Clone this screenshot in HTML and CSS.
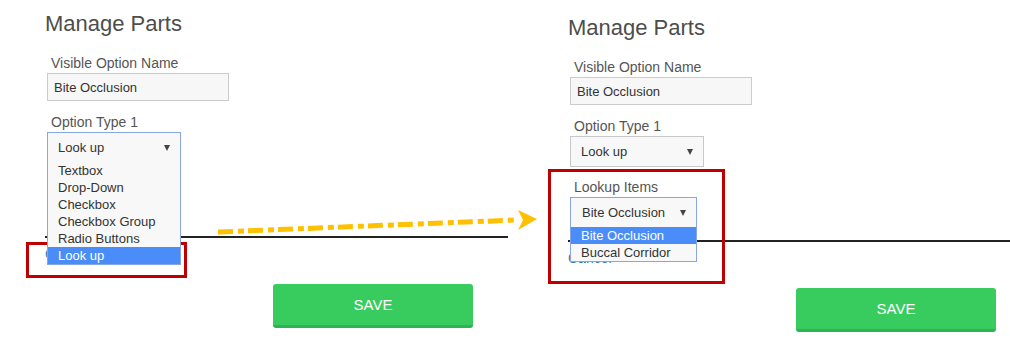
FILE: index.html
```html
<!DOCTYPE html>
<html lang="en">
<head>
    <meta charset="UTF-8">
    <title>Manage Parts - Lookup Items</title>
    <link rel="stylesheet" href="styles.css">
</head>
<body>

    <div class="page">

        <!-- before: option type set to "Look up" -->
        <section class="panel panel-before">
            <h2 class="title">Manage Parts</h2>

            <div class="field">
                <label class="field-label">Visible Option Name</label>
                <input class="input input-name" type="text" value="Bite Occlusion" readonly>
            </div>

            <div class="field">
                <label class="field-label">Option Type 1</label>
                <div class="select select-type is-focused">
                    <span class="select-value">Look up</span>
                    <i class="caret"></i>
                    <ul class="options">
                        <li>Textbox</li>
                        <li>Drop-Down</li>
                        <li>Checkbox</li>
                        <li>Checkbox Group</li>
                        <li>Radio Buttons</li>
                        <li class="active">Look up</li>
                    </ul>
                </div>
            </div>

            <hr class="rule rule-low">
            <a class="cancel" href="#">Cancel</a>
            <button class="save" type="button">SAVE</button>
        </section>

        <!-- after: lookup items field appears -->
        <section class="panel panel-after">
            <h2 class="title">Manage Parts</h2>

            <div class="field">
                <label class="field-label">Visible Option Name</label>
                <input class="input input-name" type="text" value="Bite Occlusion" readonly>
            </div>

            <div class="field">
                <label class="field-label">Option Type 1</label>
                <div class="select select-type">
                    <span class="select-value">Look up</span>
                    <i class="caret"></i>
                </div>
            </div>

            <div class="field field-lookup">
                <label class="field-label">Lookup Items</label>
                <div class="select select-lookup is-focused">
                    <span class="select-value">Bite Occlusion</span>
                    <i class="caret"></i>
                    <ul class="options">
                        <li class="active">Bite Occlusion</li>
                        <li>Buccal Corridor</li>
                    </ul>
                </div>
            </div>

            <hr class="rule">
            <a class="cancel" href="#">Cancel</a>
            <button class="save" type="button">SAVE</button>
        </section>

        <!-- annotations -->
        <div class="callout callout-left"></div>
        <div class="callout callout-right"></div>
        <svg class="arrow" width="1010" height="361" viewBox="0 0 1010 361">
            <line x1="218" y1="232" x2="516" y2="220" stroke="#ffc000" stroke-width="5" stroke-dasharray="15 5 6 4"></line>
            <polygon points="518,210 537,219 518,230 523,220" fill="#ffc000"></polygon>
        </svg>
    </div>

</body>
</html>
```

FILE: styles.css
```css
body {
    margin: 0;
    font-family: 'Liberation Sans', Arial, sans-serif;
    background-color: #ffffff;
}
.page {
    position: relative;
    display: flex;
    width: 1010px;
    height: 361px;
    overflow: hidden;
}
.panel {
    display: flex;
    flex-direction: column;
    align-items: flex-start;
    padding-left: 45px;
    box-sizing: border-box;
}
.panel-before {
    width: 523px;
    padding-right: 15px;
}
.panel-after {
    flex: 1;
    padding-top: 4px;
}
.title {
    margin: 11px 0 0;
    font-size: 22px;
    line-height: 26px;
    font-weight: normal;
    color: #4d4d4d;
}
.field {
    display: flex;
    flex-direction: column;
    align-items: flex-start;
    margin: 13px 0 0 2px;
}
.title + .field {
    margin-top: 18px;
}
.field-lookup {
    margin-top: 12px;
}
.field-label {
    padding-left: 4px;
    margin-bottom: 2px;
    font-size: 14px;
    line-height: 16px;
    color: #555;
}
.input {
    width: 182px;
    height: 28px;
    box-sizing: border-box;
    padding: 0 6px;
    border: 1px solid #cccccc;
    background-color: #f7f7f7;
    font-family: 'Liberation Sans', Arial, sans-serif;
    font-size: 13px;
    color: #333;
    outline: none;
}
.select {
    position: relative;
    display: flex;
    align-items: center;
    height: 31px;
    box-sizing: border-box;
    padding: 0 10px;
    border: 1px solid #c8c8c8;
    background-color: #f8f8f8;
    font-size: 13px;
    color: #333;
}
.select.is-focused {
    border-color: #86a6e4;
}
.select-type {
    width: 134px;
}
.select-lookup {
    width: 127px;
    padding-left: 11px;
}
.select-value {
    flex: 1;
}
.caret {
    width: 0;
    height: 0;
    border-left: 3.5px solid transparent;
    border-right: 3.5px solid transparent;
    border-top: 6px solid #444;
}
.options {
    position: absolute;
    z-index: 3;
    top: 100%;
    left: -1px;
    right: -1px;
    margin: 0;
    padding: 0;
    list-style: none;
    border: 1px solid #86a6e4;
    border-top: none;
    background-color: #f8f8f8;
}
.options li {
    height: 17px;
    line-height: 17px;
    padding-left: 10px;
    font-size: 13px;
    color: #333;
}
.options li.active {
    background-color: #4a8cf8;
    color: #ffffff;
}
.rule {
    align-self: stretch;
    margin: 12px 0 0;
    border: none;
    border-top: 2px solid #222;
}
.rule-low {
    margin-top: 73px;
}
.cancel {
    margin-top: 6px;
    font-size: 14px;
    line-height: 20px;
    color: #337ab7;
    text-decoration: none;
}
.save {
    width: 200px;
    height: 44px;
    margin: 20px 0 0 228px;
    border: none;
    border-bottom: 3px solid #2fb253;
    border-radius: 3px;
    background-color: #38cc5f;
    color: #ffffff;
    font-family: 'Liberation Sans', Arial, sans-serif;
    font-size: 15px;
    cursor: pointer;
}
.callout {
    position: absolute;
    z-index: 2;
    box-sizing: border-box;
    border: 3px solid #c00000;
}
.callout-left {
    left: 26px;
    top: 242px;
    width: 161px;
    height: 36px;
}
.callout-right {
    left: 548px;
    top: 169px;
    width: 177px;
    height: 115px;
}
.arrow {
    position: absolute;
    left: 0;
    top: 0;
    z-index: 4;
    pointer-events: none;
}
```
